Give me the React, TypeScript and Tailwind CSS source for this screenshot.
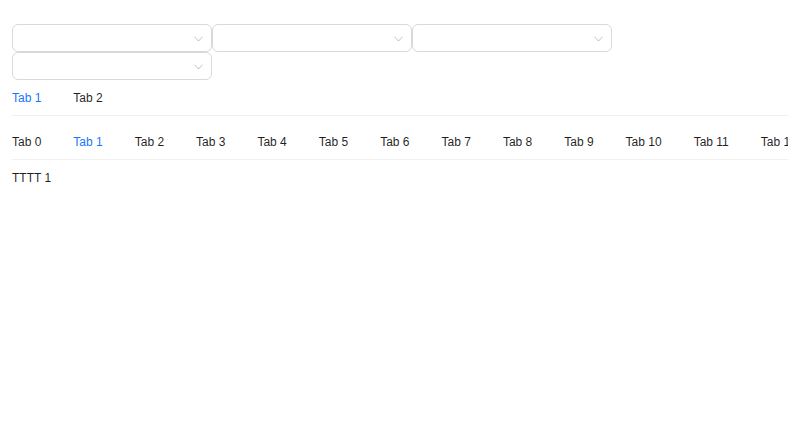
import React from "react";

function Select() {
  return (
    <div className="relative box-border h-[28px] w-[200px] rounded-[6px] border border-[#d9d9d9] bg-white">
      <svg
        className="absolute right-[8px] top-[11px]"
        width="9"
        height="6"
        viewBox="0 0 9 6"
        fill="none"
      >
        <path d="M0.5 0.8 L4.5 5 L8.5 0.8" stroke="rgba(0,0,0,0.25)" strokeWidth="1" />
      </svg>
    </div>
  );
}

export default function App() {
  const tabs = Array.from({ length: 13 }, (_, i) => `Tab ${i}`);
  return (
    <div
      className="w-[800px] h-[448px] overflow-hidden bg-white px-3 pt-6 text-[12px] text-[rgba(0,0,0,0.88)]"
      style={{ fontFamily: '"Liberation Sans", Arial, sans-serif' }}
    >
      <div className="flex flex-wrap">
        <Select />
        <Select />
        <Select />
        <Select />
      </div>
      <div className="flex border-b border-[#f0f0f0]">
        <div className="pt-[9px] pb-[7px] leading-[19px] text-[#1677ff] mr-[32px]">Tab 1</div>
        <div className="pt-[9px] pb-[7px] leading-[19px]">Tab 2</div>
      </div>
      <div className="mt-2 flex overflow-hidden whitespace-nowrap border-b border-[#f0f0f0]">
        {tabs.map((t, i) => (
          <div
            key={t}
            className={
              i === 1
                ? "shrink-0 pt-[9px] pb-[7px] leading-[19px] mr-[32px] text-[#1677ff]"
                : "shrink-0 pt-[9px] pb-[7px] leading-[19px] mr-[32px]"
            }
          >
            {t}
          </div>
        ))}
      </div>
      <div className="pt-[9px] leading-[19px]">TTTT 1</div>
    </div>
  );
}
